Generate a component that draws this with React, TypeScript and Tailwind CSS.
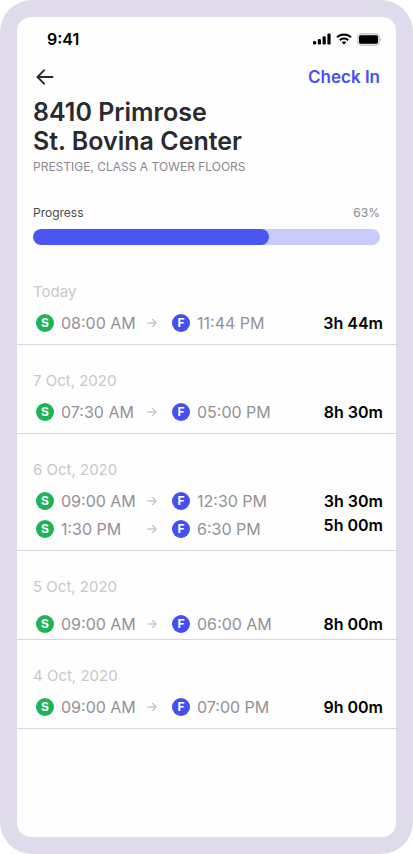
type Shift = { start: string; finish: string };
type Day = { label: string; shifts: Shift[]; totals: string[]; low?: boolean };

const DAYS: Day[] = [
  { label: "Today", shifts: [{ start: "08:00 AM", finish: "11:44 PM" }], totals: ["3h 44m"] },
  { label: "7 Oct, 2020", shifts: [{ start: "07:30 AM", finish: "05:00 PM" }], totals: ["8h 30m"] },
  {
    label: "6 Oct, 2020",
    shifts: [
      { start: "09:00 AM", finish: "12:30 PM" },
      { start: "1:30 PM", finish: "6:30 PM" },
    ],
    totals: ["3h 30m", "5h 00m"],
  },
  { label: "5 Oct, 2020", shifts: [{ start: "09:00 AM", finish: "06:00 AM" }], totals: ["8h 00m"], low: true },
  { label: "4 Oct, 2020", shifts: [{ start: "09:00 AM", finish: "07:00 PM" }], totals: ["9h 00m"] },
];

const PROGRESS = 63;

function StatusBar() {
  return (
    <div className="flex h-11 items-center justify-between pr-[14px] pl-[30px]">
      <span className="text-base leading-5 font-semibold text-black">9:41</span>
      <div className="flex items-center gap-[5px]">
        <svg width="18" height="12" viewBox="0 0 18 12" aria-hidden="true">
          <rect x="0" y="8" width="3.2" height="3.6" rx="1.4" />
          <rect x="4.8" y="6" width="3.2" height="5.6" rx="1.4" />
          <rect x="9.6" y="3.2" width="3.2" height="8.4" rx="1.4" />
          <rect x="14.4" y="0.4" width="3.2" height="11.2" rx="1.2" />
        </svg>
        <svg width="16" height="12" viewBox="0 0 16 12" fill="none" stroke="#000" strokeWidth="2" aria-hidden="true">
          <path d="M1 4.3a10 10 0 0 1 14 0" />
          <path d="M3.7 7.2a6.2 6.2 0 0 1 8.6 0" />
          <path d="M8 11.6 5.7 9.3a3.3 3.3 0 0 1 4.6 0z" fill="#000" stroke="none" />
        </svg>
        <svg width="25" height="13" viewBox="0 0 25 13" aria-hidden="true">
          <rect x="0.6" y="0.6" width="21.8" height="11.8" rx="3.4" fill="#dddbe0" stroke="#cfcdd2" />
          <rect x="2" y="2.3" width="19" height="8.4" rx="1.6" />
          <path d="M23.4 4.5c1.4.6 1.4 3.4 0 4z" fill="#bdbbc0" />
        </svg>
      </div>
    </div>
  );
}

function Badge({ letter, tone }: { letter: string; tone: string }) {
  return (
    <span className={`flex size-[18px] items-center justify-center rounded-full text-xs leading-none font-bold text-white ${tone}`}>
      {letter}
    </span>
  );
}

function ShiftRow({ start, finish }: Shift) {
  return (
    <li className="flex h-5 items-center">
      <Badge letter="S" tone="bg-[#1db455]" />
      <span className="ml-[7px] w-[86px]">{start}</span>
      <svg width="10" height="10" viewBox="0 0 10 10" fill="none" stroke="#c9c7cc" strokeWidth="1.4" strokeLinecap="round" strokeLinejoin="round" aria-hidden="true">
        <path d="M0.8 5h8.2M5.6 1.4 9.1 5 5.6 8.6" />
      </svg>
      <span className="ml-[15px] flex items-center gap-[7px]">
        <Badge letter="F" tone="bg-[#4650f2]" />
        {finish}
      </span>
    </li>
  );
}

function DaySection({ label, shifts, totals, low }: Day) {
  return (
    <section className="border-b border-[#d6d5da] pt-[25px]">
      <h2 className="px-4 text-[15px] leading-[22px] font-normal text-[#c9c7cc]">{label}</h2>
      <div className={`flex items-start justify-between pr-[13px] pl-[19px] text-base leading-5 ${low ? "pt-4 pb-[5px]" : "pt-[10px] pb-[11px]"}`}>
        <ul className="flex flex-col gap-2 text-[#939196]">
          {shifts.map((s) => (
            <ShiftRow key={s.start} {...s} />
          ))}
        </ul>
        <ul className="flex flex-col gap-1 text-right font-semibold text-black">
          {totals.map((t) => (
            <li key={t}>{t}</li>
          ))}
        </ul>
      </div>
    </section>
  );
}

export default function App() {
  return (
    <div className="flex min-h-screen flex-col rounded-[32px] bg-[#dfdbea] p-[17px] font-['Inter','Liberation_Sans',sans-serif]">
      <main className="flex-1 rounded-[14px] bg-[#fefefe]">
        <StatusBar />
        <header className="px-4">
          <div className="flex h-8 items-center justify-between">
            <button type="button" aria-label="Back" className="flex size-6 items-center justify-center text-[#2b2a2e]">
              <svg width="18" height="16" viewBox="0 0 18 16" fill="none" stroke="currentColor" strokeWidth="1.9" strokeLinecap="round" strokeLinejoin="round" aria-hidden="true">
                <path d="M16.5 8H1.8M8 1.3 1.5 8 8 14.7" />
              </svg>
            </button>
            <button type="button" className="text-[17px] leading-6 font-semibold text-[#4650f2]">
              Check In
            </button>
          </div>
          <h1 className="mt-[5px] text-[25px] leading-[29px] font-semibold text-[#2b2a2e]">
            8410 Primrose
            <br />
            St. Bovina Center
          </h1>
          <p className="mt-[3px] text-xs leading-4 text-[#8a888d]">PRESTIGE, CLASS A TOWER FLOORS</p>
        </header>
        <div className="px-4 pt-[30px] pb-[11px]">
          <div className="flex justify-between text-xs leading-4">
            <span id="progress-label" className="text-[#4c4a50]">Progress</span>
            <span className="text-[#8a888d]">{PROGRESS}%</span>
          </div>
          <div
            role="progressbar"
            aria-labelledby="progress-label"
            aria-valuenow={PROGRESS}
            aria-valuemin={0}
            aria-valuemax={100}
            className="mt-2 h-4 overflow-hidden rounded-full bg-[#c9cbfc]"
          >
            <div className="h-full w-[68%] rounded-full bg-[#4a55f2]" />
          </div>
        </div>
        {DAYS.map((d) => (
          <DaySection key={d.label} {...d} />
        ))}
      </main>
    </div>
  );
}
